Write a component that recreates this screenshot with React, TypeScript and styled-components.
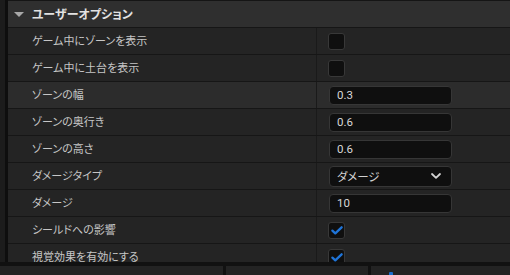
import React from "react";
import styled, { createGlobalStyle } from "styled-components";

const Global = createGlobalStyle`
  html, body { margin: 0; padding: 0; background: #111111; }
  body { font-family: "Noto Sans CJK JP", "Noto Sans", sans-serif; }
`;

const Screen = styled.div`
  width: 510px;
  height: 275px;
  display: flex;
  flex-direction: column;
  overflow: hidden;
  background: #111111;
`;

const Main = styled.div`
  display: flex;
  height: 262px;
  flex: none;
  overflow: hidden;
`;

const LeftStrip = styled.div`
  width: 5px;
  flex: none;
  background: #1c1c1c;
  border-right: 3px solid #0e0e0e;
`;

const Panel = styled.div`
  flex: 1;
  display: flex;
  flex-direction: column;
  border-top: 1px solid #151515;
  background: #242424;
`;

const Header = styled.div`
  height: 26px;
  flex: none;
  display: flex;
  align-items: center;
  background: #2f2f2f;
  border-bottom: 1px solid #161616;
  padding-left: 6px;
  gap: 8px;
`;

const Triangle = styled.span`
  width: 0;
  height: 0;
  border-left: 5px solid transparent;
  border-right: 5px solid transparent;
  border-top: 5px solid #a8a8a8;
  margin-top: 1px;
`;

const HeaderTitle = styled.span`
  font-size: 12px;
  line-height: 14px;
  font-weight: 700;
  color: #e2e2e2;
  font-feature-settings: "palt";
`;

const Row = styled.div<{ $hover?: boolean }>`
  height: 26px;
  flex: none;
  display: flex;
  background: ${(p) => (p.$hover ? "#2c2c2c" : "#242424")};
  border-bottom: 1px solid #161616;
`;

const NameCell = styled.div`
  width: 284px;
  flex: none;
  display: flex;
  align-items: center;
  padding-left: 24px;
  padding-bottom: 2px;
  box-sizing: content-box;
  border-right: 1px solid #1a1a1a;
  font-size: 11px;
  line-height: 11px;
  color: #c6c6c6;
  font-feature-settings: "palt";
  white-space: nowrap;
`;

const ValueCell = styled.div`
  flex: 1;
  display: flex;
  align-items: center;
  padding-left: 12px;
`;

const CheckBox = styled.div`
  width: 17px;
  height: 17px;
  box-sizing: border-box;
  margin-left: -1px;
  background: #0f0f0f;
  border: 1px solid #383838;
  border-radius: 3px;
  display: flex;
  align-items: center;
  justify-content: center;
`;

const TextInput = styled.div<{ $h?: number }>`
  box-sizing: border-box;
  width: 123px;
  height: ${(p) => p.$h ?? 19}px;
  background: #0f0f0f;
  border: 1px solid #363636;
  border-radius: 4px;
  display: flex;
  align-items: center;
  justify-content: space-between;
  padding: 0 10px 0 7px;
  font-family: Roboto, "Noto Sans", sans-serif;
  font-size: 11.5px;
  line-height: 14px;
  color: #d8d8d8;
`;

const DropText = styled.span`
  font-family: "Noto Sans CJK JP", sans-serif;
  font-size: 11.5px;
  line-height: 14px;
  font-feature-settings: "palt";
  color: #d0d0d0;
`;

const BottomBar = styled.div`
  margin-top: 4px;
  flex: 1;
  display: flex;
  background: #111111;
  gap: 3px;
`;

const BottomSeg = styled.div<{ $w?: number }>`
  background: #232323;
  ${(p) => (p.$w ? `width: ${p.$w}px; flex: none;` : "flex: 1;")}
  position: relative;
`;

const BlueMark = styled.span`
  position: absolute;
  left: 18px;
  top: 6px;
  width: 4px;
  height: 4px;
  border-radius: 1px;
  background: #1a6fd0;
`;

const Check = () => (
  <svg width="12" height="9" viewBox="0 0 12 9">
    <path d="M1.4 4.6 L4.3 7.4 L10.6 1.3" fill="none" stroke="#1f74d8" strokeWidth="2.3" strokeLinecap="round" strokeLinejoin="round" />
  </svg>
);

const Chevron = () => (
  <svg width="10" height="6" viewBox="0 0 10 6">
    <path d="M1 1 L5 4.8 L9 1" fill="none" stroke="#d4d4d4" strokeWidth="1.8" strokeLinecap="round" strokeLinejoin="round" />
  </svg>
);

type RowDef =
  | { label: string; kind: "check"; checked: boolean; hover?: boolean }
  | { label: string; kind: "text"; value: string; hover?: boolean }
  | { label: string; kind: "select"; value: string; hover?: boolean };

const rows: RowDef[] = [
  { label: "ゲーム中にゾーンを表示", kind: "check", checked: false },
  { label: "ゲーム中に土台を表示", kind: "check", checked: false },
  { label: "ゾーンの幅", kind: "text", value: "0.3", hover: true },
  { label: "ゾーンの奥行き", kind: "text", value: "0.6" },
  { label: "ゾーンの高さ", kind: "text", value: "0.6" },
  { label: "ダメージタイプ", kind: "select", value: "ダメージ" },
  { label: "ダメージ", kind: "text", value: "10" },
  { label: "シールドへの影響", kind: "check", checked: true },
  { label: "視覚効果を有効にする", kind: "check", checked: true },
];

export default function App() {
  return (
    <Screen>
      <Global />
      <Main>
        <LeftStrip />
        <Panel>
          <Header>
            <Triangle />
            <HeaderTitle>ユーザーオプション</HeaderTitle>
          </Header>
          {rows.map((r, i) => (
            <Row key={i} $hover={r.hover}>
              <NameCell>{r.label}</NameCell>
              <ValueCell>
                {r.kind === "check" && <CheckBox>{r.checked && <Check />}</CheckBox>}
                {r.kind === "text" && <TextInput>{r.value}</TextInput>}
                {r.kind === "select" && (
                  <TextInput $h={21}>
                    <DropText>{r.value}</DropText>
                    <Chevron />
                  </TextInput>
                )}
              </ValueCell>
            </Row>
          ))}
        </Panel>
      </Main>
      <BottomBar>
        <BottomSeg $w={223} />
        <BottomSeg $w={142} />
        <BottomSeg>
          <BlueMark />
        </BottomSeg>
      </BottomBar>
    </Screen>
  );
}
